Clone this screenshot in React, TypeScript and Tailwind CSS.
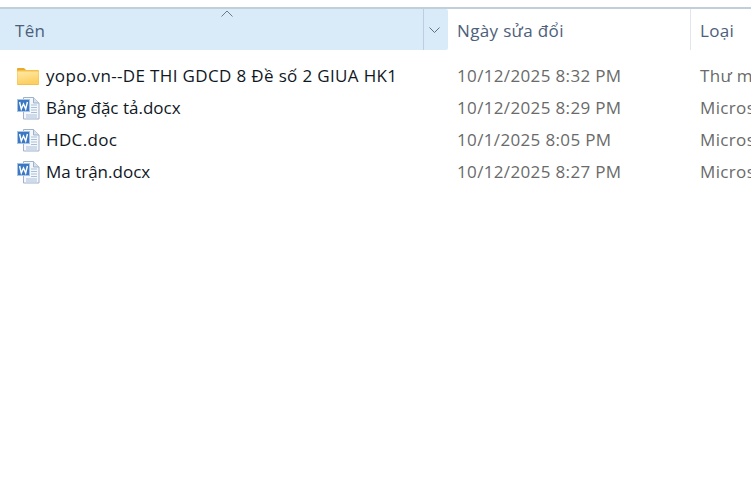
import React from 'react';

const font = "font-['Open_Sans','Noto_Sans',sans-serif]";

const FolderIcon = () => (
  <svg width="22" height="18" viewBox="0 0 22 18" className="shrink-0">
    <defs>
      <linearGradient id="folderFill" x1="0" y1="0" x2="0.3" y2="1">
        <stop offset="0" stopColor="#ffe9a6" />
        <stop offset="1" stopColor="#fcd062" />
      </linearGradient>
    </defs>
    <path d="M0 2a1 1 0 0 1 1-1h6l2.5 2.5V5H0z" fill="#eaa92a" />
    <rect x="0" y="3" width="22" height="15" rx="1" fill="#f5c04a" />
    <rect x="0.5" y="4.5" width="21" height="12.5" fill="url(#folderFill)" />
  </svg>
);

const WordIcon = () => (
  <svg width="23" height="23" viewBox="0 0 23 23" className="shrink-0">
    <path d="M6.5 0.5h10l5.5 5.500v16h-15.500z" fill="#f4f7fb" stroke="#9fb2c9" />
    <path d="M16.500 0.500v5.500h5.500" fill="#d5e2f0" stroke="#9fb2c9" />
    <path d="M14 8h6M14 10.500h6M14 13h6M14 15.500h6M9 18h11M9 20h11" stroke="#a9bfd8" />
    <rect x="0.500" y="2.500" width="12" height="12" fill="#3a78c4" stroke="#a8c4e2" />
    <path d="M2.600 5l1.700 7 2.200-5 2.200 5 1.700-7" fill="none" stroke="#ffffff" strokeWidth="1.400" />
  </svg>
);

const rows = [
  { name: 'yopo.vn--DE THI GDCD 8 Đề số 2 GIUA HK1', date: '10/12/2025 8:32 PM', type: 'Thư mục', folder: true, nameClass: '' },
  { name: 'Bảng đặc tả.docx', date: '10/12/2025 8:29 PM', type: 'Microsoft Word', folder: false, nameClass: 'tracking-normal' },
  { name: 'HDC.doc', date: '10/1/2025 8:05 PM', type: 'Microsoft Word', folder: false, nameClass: '' },
  { name: 'Ma trận.docx', date: '10/12/2025 8:27 PM', type: 'Microsoft Word', folder: false, nameClass: 'tracking-normal' },
];

export default function App() {
  return (
    <div className={`w-[751px] h-[491px] overflow-hidden bg-white pt-[7px] text-[17px] tracking-[0.35px] ${font}`}>
      <div className="flex h-[43px] border-t-2 border-[#c1cfdb] text-[#4c607a]">
        <div className="relative flex w-[448px] shrink-0 rounded-r-[2px] bg-[#d9ebf9]">
          <div className="flex w-[424px] items-center border-r border-[#bccfdf] pl-[15px] pt-[2px]">Tên</div>
          <div className="flex flex-1 items-center justify-center pr-[4px]">
            <svg width="11" height="6" viewBox="0 0 11 6">
              <path d="M0.500 0.500l5 5 5-5" fill="none" stroke="#5f6f80" />
            </svg>
          </div>
          <svg width="12" height="7" viewBox="0 0 12 7" className="absolute left-[221px] top-[1px]">
            <path d="M0.500 6.500l5.500-5.500 5.500 5.500" fill="none" stroke="#6f7a84" />
          </svg>
        </div>
        <div className="flex w-[243px] shrink-0 items-center border-r border-[#e2e6ea] pl-[9px] pt-[2px]">Ngày sửa đổi</div>
        <div className="flex items-center pl-[9px] pt-[2px]">Loại</div>
      </div>
      <div className="pt-[10px]">
        {rows.map((row) => (
          <div key={row.name} className="flex h-[32px] items-center whitespace-nowrap">
            <div className="flex w-[448px] shrink-0 items-center text-[#10171f]">
              <div className="flex w-[46px] shrink-0 justify-start pl-[17px]">
                {row.folder ? <FolderIcon /> : <WordIcon />}
              </div>
              <span className={row.nameClass}>{row.name}</span>
            </div>
            <div className="w-[243px] shrink-0 pl-[9px] text-[#6a6a6a]">{row.date}</div>
            <div className="pl-[9px] text-[#6a6a6a]">{row.type}</div>
          </div>
        ))}
      </div>
    </div>
  );
}
